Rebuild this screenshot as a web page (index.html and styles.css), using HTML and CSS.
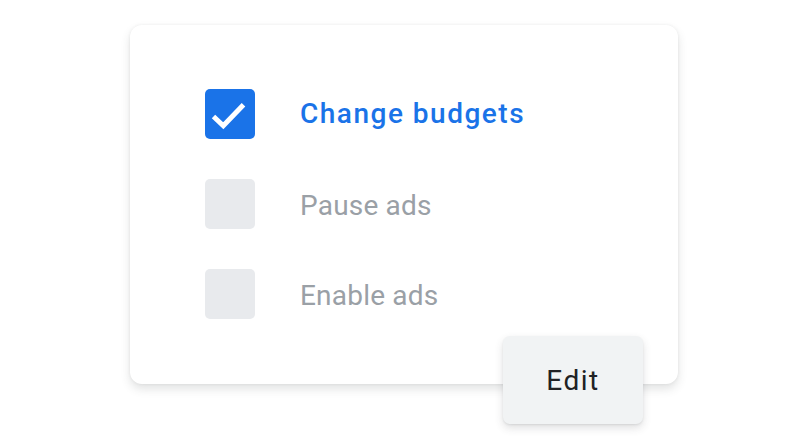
FILE: index.html
```html
<!DOCTYPE html>
<html>
<head>
<meta charset="utf-8">
<link rel="stylesheet" href="styles.css">
</head>
<body>
<div class="stage">
  <div class="card">
    <div class="row">
      <div class="box checked">
        <svg width="50" height="50" viewBox="0 0 50 50"><path d="M8.5 27.5 L18.3 36.7 L38.5 15.7" fill="none" stroke="#fff" stroke-width="5" stroke-linejoin="miter"/></svg>
      </div>
      <span class="label active">Change budgets</span>
    </div>
    <div class="row">
      <div class="box"></div>
      <span class="label">Pause ads</span>
    </div>
    <div class="row">
      <div class="box"></div>
      <span class="label">Enable ads</span>
    </div>
    <div class="edit">Edit</div>
  </div>
</div>
</body>
</html>
```
FILE: styles.css
```css
html, body {
  margin: 0;
  padding: 0;
  background: #ffffff;
}
.stage {
  width: 800px;
  height: 448px;
  padding-top: 25px;
  box-sizing: border-box;
  font-family: Roboto, "Noto Sans", sans-serif;
}
.card {
  position: relative;
  margin-left: 130px;
  width: 548px;
  height: 359px;
  box-sizing: border-box;
  background: #fff;
  border-radius: 12px;
  box-shadow: 0 5px 10px rgba(60, 64, 67, 0.15), 0 0 3px rgba(60, 64, 67, 0.08);
  padding: 64px 0 0 75px;
  display: flex;
  flex-direction: column;
  gap: 40px;
}
.row {
  display: flex;
  align-items: center;
  gap: 45px;
  height: 50px;
}
.box {
  width: 50px;
  height: 50px;
  border-radius: 5px;
  background: #e8eaed;
  flex: none;
}
.box.checked {
  background: #1a73e8;
}
.box svg {
  display: block;
}
.label {
  font-size: 28px;
  color: #9aa0a6;
  line-height: 1;
  letter-spacing: 0.2px;
  padding-top: 3px;
}
.label.active {
  color: #1a73e8;
  font-weight: 500;
  letter-spacing: 1.5px;
  padding-top: 0;
}
.edit {
  position: absolute;
  left: 373px;
  top: 311px;
  width: 140px;
  height: 88px;
  background: #f1f3f4;
  border-radius: 7px;
  box-shadow: 0 4px 8px rgba(60, 64, 67, 0.16), 0 1px 2px rgba(60, 64, 67, 0.1);
  display: flex;
  align-items: center;
  justify-content: center;
  font-size: 28px;
  color: #202124;
  font-weight: 400;
  letter-spacing: 1.5px;
}
```
